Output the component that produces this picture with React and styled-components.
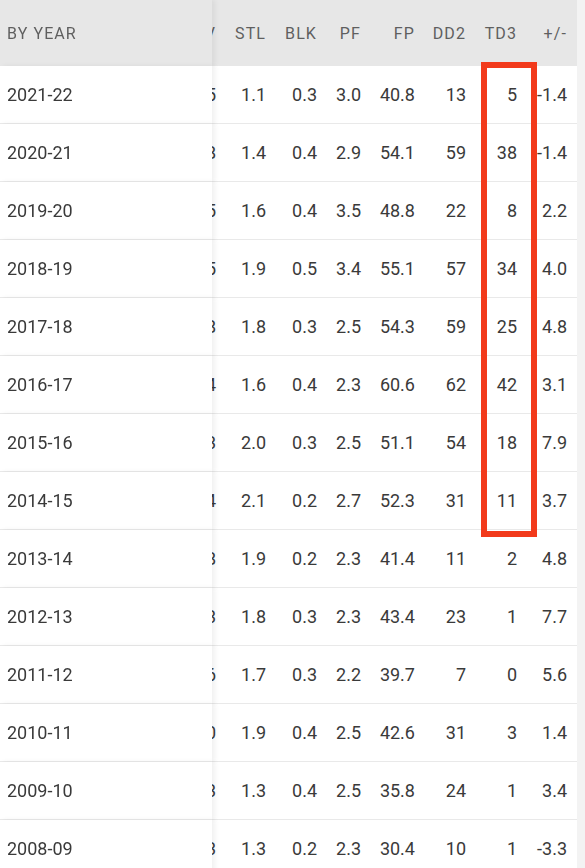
import React, { useLayoutEffect, useRef } from "react";
import styled, { createGlobalStyle } from "styled-components";

const GlobalStyle = createGlobalStyle`
  body {
    margin: 0;
    background: #f3f3f3;
    font-family: Roboto, "Liberation Sans", sans-serif;
  }
`;

const Page = styled.div`
  position: relative;
  width: 577px;
  background: #ffffff;
`;

const Scroller = styled.div`
  overflow-x: auto;
  scrollbar-width: none;
  &::-webkit-scrollbar {
    display: none;
  }
`;

const Table = styled.table`
  border-collapse: separate;
  border-spacing: 0;
  table-layout: fixed;
  width: 769px;
`;

const HeadRow = styled.tr`
  height: 66px;
  background: #e7e7e7;
`;

const Row = styled.tr`
  height: 58px;
`;

const Th = styled.th`
  box-sizing: border-box;
  width: ${(p) => p.$w}px;
  padding: 0 ${(p) => p.$pr || 4}px 0 0;
  text-align: right;
  font-size: 16px;
  font-weight: 400;
  letter-spacing: 1.1px;
  color: #5f5f5f;
  background: #e7e7e7;
  white-space: nowrap;
  overflow: hidden;
`;

const Td = styled.td`
  box-sizing: border-box;
  padding: 0 ${(p) => p.$pr || 4}px 0 0;
  text-align: right;
  font-size: 18px;
  color: #3a3a3a;
  border-bottom: 1px solid #e9e9e9;
  white-space: nowrap;
  overflow: hidden;
`;

const YearHead = styled(Th)`
  position: sticky;
  left: 0;
  z-index: 2;
  text-align: left;
  padding-left: 7px;
  box-shadow: 3px 0 5px rgba(0, 0, 0, 0.06);
`;

const YearCell = styled(Td)`
  position: sticky;
  left: 0;
  z-index: 2;
  text-align: left;
  padding-left: 7px;
  background: #ffffff;
  box-shadow: 3px 0 5px rgba(0, 0, 0, 0.06);
`;

const Highlight = styled.div`
  position: absolute;
  left: 481px;
  top: 62px;
  width: 56px;
  height: 475px;
  box-sizing: border-box;
  border: 6px solid #f23a1b;
  pointer-events: none;
  z-index: 3;
`;

const cols = [
  { key: "PTS", w: 50 },
  { key: "REB", w: 50 },
  { key: "AST", w: 50 },
  { key: "TOV", w: 50 },
  { key: "STL", w: 50 },
  { key: "BLK", w: 51 },
  { key: "PF", w: 44 },
  { key: "FP", w: 54 },
  { key: "DD2", w: 51 },
  { key: "TD3", w: 51 },
  { key: "+/-", w: 56, pr: 10 },
];

const rows = [
  ["2021-22", 18.5, 6.8, 7.1, 3.5, 1.1, 0.3, 3.0, 40.8, 13, 5, -1.4],
  ["2020-21", 22.2, 11.5, 11.7, 4.8, 1.4, 0.4, 2.9, 54.1, 59, 38, -1.4],
  ["2019-20", 27.2, 8.0, 7.0, 4.5, 1.6, 0.4, 3.5, 48.8, 22, 8, 2.2],
  ["2018-19", 22.9, 11.1, 10.7, 4.5, 1.9, 0.5, 3.4, 55.1, 57, 34, 4.0],
  ["2017-18", 25.4, 10.1, 10.3, 4.8, 1.8, 0.3, 2.5, 54.3, 59, 25, 4.8],
  ["2016-17", 31.6, 10.7, 10.4, 5.4, 1.6, 0.4, 2.3, 60.6, 62, 42, 3.1],
  ["2015-16", 23.5, 7.8, 10.4, 4.3, 2.0, 0.3, 2.5, 51.1, 54, 18, 7.9],
  ["2014-15", 28.1, 7.3, 8.6, 4.4, 2.1, 0.2, 2.7, 52.3, 31, 11, 3.7],
  ["2013-14", 21.8, 5.7, 6.9, 3.8, 1.9, 0.2, 2.3, 41.4, 11, 2, 4.8],
  ["2012-13", 23.2, 5.2, 7.4, 3.3, 1.8, 0.3, 2.3, 43.4, 23, 1, 7.7],
  ["2011-12", 23.6, 4.6, 5.5, 3.6, 1.7, 0.3, 2.2, 39.7, 7, 0, 5.6],
  ["2010-11", 21.9, 4.6, 8.2, 3.0, 1.9, 0.4, 2.5, 42.6, 31, 3, 1.4],
  ["2009-10", 16.1, 4.9, 8.0, 3.3, 1.3, 0.4, 2.5, 35.8, 24, 1, 3.4],
  ["2008-09", 15.3, 4.4, 5.3, 3.3, 1.3, 0.2, 2.3, 30.4, 10, 1, -3.3],
];

const fmt = (v, i) => {
  if (i === 8 || i === 9) return String(v); // DD2, TD3 are counts
  return v.toFixed(1);
};

const App = () => {
  const scroller = useRef(null);

  // scroll so only the last sliver of TOV peeks out from behind the year column
  useLayoutEffect(() => {
    const el = scroller.current;
    if (!el) return;
    const tov = el.querySelector("th:nth-child(5)");
    el.scrollLeft = tov.offsetLeft + tov.offsetWidth - 220;
  }, []);

  return (
    <>
      <GlobalStyle />
      <Page>
        <Scroller ref={scroller}>
          <Table>
            <thead>
              <HeadRow>
                <YearHead $w={212}>BY YEAR</YearHead>
                {cols.map((c) => (
                  <Th key={c.key} $w={c.w} $pr={c.pr}>
                    {c.key}
                  </Th>
                ))}
              </HeadRow>
            </thead>
            <tbody>
              {rows.map(([year, ...vals]) => (
                <Row key={year}>
                  <YearCell>{year}</YearCell>
                  {vals.map((v, i) => (
                    <Td key={i} $pr={cols[i].pr}>
                      {fmt(v, i)}
                    </Td>
                  ))}
                </Row>
              ))}
            </tbody>
          </Table>
        </Scroller>
        <Highlight />
      </Page>
    </>
  );
};

export default App;
